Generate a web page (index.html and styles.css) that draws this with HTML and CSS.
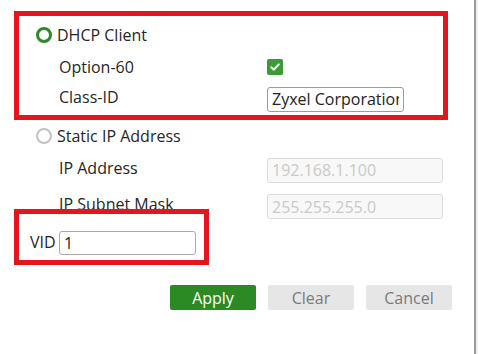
FILE: index.html
```html
<!DOCTYPE html>
<html lang="en">
<head>
    <meta charset="UTF-8">
    <meta name="viewport" content="width=device-width, initial-scale=1.0">
    <title>WAN Settings</title>
    <link rel="stylesheet" href="styles.css">
</head>
<body>
    <div class="dialog">
        <div class="group mark">
            <div class="row head">
                <span class="radio on"></span>
                <span class="title">DHCP Client</span>
            </div>
            <div class="row">
                <span class="label">Option-60</span>
                <span class="check">
                    <svg width="12" height="12" viewBox="0 0 12 12"><path d="M2.2 6.3 L4.8 8.8 L9.8 3.4" fill="none" stroke="#fff" stroke-width="2" stroke-linecap="round" stroke-linejoin="round"/></svg>
                </span>
            </div>
            <div class="row">
                <span class="label up">Class-ID</span>
                <input class="text short" type="text" value="Zyxel Corporation">
            </div>
        </div>

        <div class="row head static">
            <span class="radio"></span>
            <span class="title">Static IP Address</span>
        </div>
        <div class="row tall">
            <span class="label up">IP Address</span>
            <input class="text long" type="text" value="192.168.1.100" disabled>
        </div>
        <div class="row tall last">
            <span class="label up">IP Subnet Mask</span>
            <input class="text long" type="text" value="255.255.255.0" disabled>
        </div>

        <div class="vid mark">
            <span class="vid-label">VID</span>
            <input class="text short" type="text" value="1">
        </div>

        <div class="buttons">
            <button class="btn apply">Apply</button>
            <button class="btn">Clear</button>
            <button class="btn">Cancel</button>
        </div>
    </div>
</body>
</html>
```

FILE: styles.css
```css
body {
    margin: 0;
    background-color: #f0f0f0;
    font-family: "Open Sans", Lato, sans-serif;
    font-size: 16px;
    color: #262626;
}

.dialog {
    width: 453px;
    height: 338px;
    padding: 16px 2px 0 19px;
    background: white;
    border-right: 2px solid #9a9a9a;
}

.mark {
    outline: 5px solid #e2161c;
}

.group {
    width: 424px;
    height: 96px;
    padding-top: 3px;
}

.row {
    display: flex;
    align-items: center;
    height: 32px;
}

.row.static {
    margin-top: 5px;
}

.row.tall {
    height: 36px;
}

.row.last {
    height: 37px;
}

.radio {
    width: 10px;
    height: 10px;
    margin-left: 17px;
    margin-right: 5px;
    border: 3px solid #2e8a2a;
    border-radius: 50%;
}

.radio:not(.on) {
    width: 12px;
    height: 12px;
    border: 2px solid #c2c2c2;
}

.label {
    width: 208px;
    padding-left: 40px;
}

.label.up {
    margin-bottom: 5px;
}

.check {
    display: flex;
    align-items: center;
    justify-content: center;
    width: 16px;
    height: 16px;
    border-radius: 2px;
    background-color: #3a9a33;
}

.text {
    box-sizing: border-box;
    height: 25px;
    padding: 0 4px;
    border: 1px solid #9c9c9c;
    border-radius: 3px;
    font-family: inherit;
    font-size: 16px;
    color: #222;
    background: white;
}

.text.short {
    width: 137px;
}

.text.long {
    width: 176px;
}

.text:disabled {
    border-color: #dcdcdc;
    background-color: #f8f8f8;
    color: #c9c9c9;
}

.vid {
    display: flex;
    align-items: flex-end;
    width: 185px;
    height: 41px;
    margin-top: -11px;
    padding-bottom: 5px;
}

.vid-label {
    width: 29px;
    padding-left: 11px;
    margin-bottom: 2px;
}

.vid .text {
    height: 24px;
    border-color: #aaa;
}

.buttons {
    display: flex;
    justify-content: flex-end;
    gap: 12px;
    margin-top: 25px;
    padding-right: 20px;
}

.btn {
    width: 86px;
    height: 25px;
    border: none;
    border-radius: 2px;
    background-color: #e6e6e6;
    color: #7a7a7a;
    font-family: inherit;
    font-size: 16px;
}

.btn.apply {
    background-color: #2b8a24;
    color: white;
}
```
